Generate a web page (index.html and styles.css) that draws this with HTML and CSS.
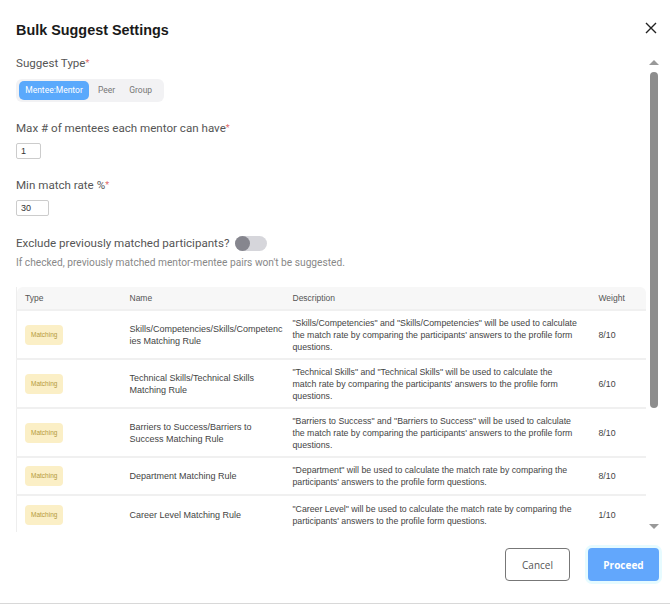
FILE: index.html
```html
<!DOCTYPE html>
<html lang="en">
<head>
  <meta charset="UTF-8" />
  <title>Bulk Suggest Settings</title>
  <link rel="stylesheet" href="styles.css">
</head>
<body>
  <div class="modal">
    <div class="modal-head">
      <h1>Bulk Suggest Settings</h1>
      <button class="close" aria-label="Close">
        <svg width="12" height="12" viewBox="0 0 12 12"><path d="M1 1L11 11M11 1L1 11" stroke="#222" stroke-width="1.4" fill="none"/></svg>
      </button>
    </div>

    <div class="modal-body">
      <div class="pane">
        <div class="label">Suggest Type<span class="req">*</span></div>
        <div class="segmented">
          <span class="seg active">Mentee:Mentor</span>
          <span class="seg">Peer</span>
          <span class="seg">Group</span>
        </div>

        <div class="label">Max # of mentees each mentor can have<span class="req">*</span></div>
        <input class="num small" value="1">

        <div class="label">Min match rate %<span class="req">*</span></div>
        <input class="num" value="30">

        <div class="label exclude">Exclude previously matched participants?
          <span class="toggle"><span class="knob"></span></span>
        </div>
        <div class="hint">If checked, previously matched mentor-mentee pairs won't be suggested.</div>

        <table class="rules">
          <thead>
            <tr><th class="c-type">Type</th><th class="c-name">Name</th><th class="c-desc">Description</th><th class="c-w">Weight</th></tr>
          </thead>
          <tbody>
            <tr class="tall">
              <td><span class="badge">Matching</span></td>
              <td>Skills/Competencies/Skills/Competenc ies Matching Rule</td>
              <td>"Skills/Competencies" and "Skills/Competencies" will be used to calculate the match rate by comparing the participants' answers to the profile form questions.</td>
              <td>8/10</td>
            </tr>
            <tr class="tall">
              <td><span class="badge">Matching</span></td>
              <td>Technical Skills/Technical Skills Matching Rule</td>
              <td>"Technical Skills" and "Technical Skills" will be used to calculate the match rate by comparing the participants' answers to the profile form questions.</td>
              <td>6/10</td>
            </tr>
            <tr class="tall">
              <td><span class="badge">Matching</span></td>
              <td>Barriers to Success/Barriers to Success Matching Rule</td>
              <td>"Barriers to Success" and "Barriers to Success" will be used to calculate the match rate by comparing the participants' answers to the profile form questions.</td>
              <td>8/10</td>
            </tr>
            <tr>
              <td><span class="badge">Matching</span></td>
              <td>Department Matching Rule</td>
              <td>"Department" will be used to calculate the match rate by comparing the participants' answers to the profile form questions.</td>
              <td>8/10</td>
            </tr>
            <tr>
              <td><span class="badge">Matching</span></td>
              <td>Career Level Matching Rule</td>
              <td>"Career Level" will be used to calculate the match rate by comparing the participants' answers to the profile form questions.</td>
              <td>1/10</td>
            </tr>
          </tbody>
        </table>
      </div>
      <div class="scrollbar">
        <span class="arrow up"></span>
        <span class="thumb"></span>
        <span class="arrow down"></span>
      </div>
    </div>

    <div class="modal-foot">
      <button class="btn cancel">Cancel</button>
      <button class="btn proceed">Proceed</button>
    </div>
  </div>
</body>
</html>
```

FILE: styles.css
```css
* { box-sizing: border-box; }
body {
  margin: 0;
  background: #fff;
  font-family: Roboto, "Liberation Sans", sans-serif;
  color: #333;
}
.modal {
  width: 670px;
  height: 604px;
  display: flex;
  flex-direction: column;
  border-bottom: 1px solid #d8d8d8;
}
.modal-head {
  height: 55px;
  display: flex;
  align-items: center;
  justify-content: space-between;
  padding: 0 12px 0 16px;
}
.modal-head h1 {
  margin: 4px 0 0;
  font-family: "Liberation Sans", Arial, sans-serif;
  font-size: 14.4px;
  font-weight: 700;
  color: #1a1a1a;
}
.close {
  border: 0;
  background: none;
  padding: 0;
  width: 14px;
  height: 14px;
  display: flex;
  align-items: center;
  justify-content: center;
}

.modal-body {
  height: 477px;
  display: flex;
}
.pane {
  flex: 1;
  overflow: hidden;
  padding-left: 16px;
}
.label {
  font-size: 11.6px;
  line-height: 16px;
  color: #555;
  margin-top: 18px;
}
.pane > .label:first-child { margin-top: 0; }
.req { color: #e06a6a; font-size: 9px; vertical-align: top; }

.segmented {
  display: flex;
  align-items: center;
  margin-top: 8px;
  padding: 2px 3px;
  height: 23px;
  width: 148px;
  background: #f2f2f4;
  border-radius: 6px;
}
.seg {
  font-size: 8.5px;
  color: #777;
  line-height: 19px;
  padding: 0 7px;
}
.seg.active {
  background: #5aa9fc;
  color: #fff;
  border-radius: 5px;
  width: 70px;
  padding: 0;
  margin-right: 2px;
  text-align: center;
}

.num {
  display: block;
  margin-top: 7px;
  width: 33px;
  height: 16px;
  border: 1px solid #ccc;
  border-radius: 2px;
  padding: 0 4px;
  font-size: 9px;
  font-family: "Liberation Sans", sans-serif;
  color: #333;
}
.num.small { width: 25px; }

.exclude {
  display: flex;
  align-items: center;
  gap: 6px;
  margin-top: 19px;
}
.toggle {
  width: 32px;
  height: 15px;
  border-radius: 8px;
  background: #d6d6db;
  display: inline-flex;
}
.knob {
  width: 15px;
  height: 15px;
  border-radius: 50%;
  background: #86868e;
}
.hint {
  margin-top: 6px;
  font-size: 10.2px;
  color: #888;
}

.rules {
  margin-top: 19px;
  width: 630px;
  border-collapse: collapse;
  font-family: "Liberation Sans", Arial, sans-serif;
  font-size: 8.75px;
  line-height: 12px;
  color: #444;
  table-layout: fixed;
  border-left: 1px solid #eee;
}
.rules th {
  background: #f7f7f7;
  font-weight: 400;
  font-size: 8.5px;
  color: #555;
  text-align: left;
  height: 23px;
  padding: 0 8px;
}
.rules th:first-child { border-top-left-radius: 6px; }
.rules th:last-child { border-top-right-radius: 6px; }
.c-type { width: 105px; }
.c-name { width: 163px; }
.c-desc { width: 301px; }
.rules td {
  padding: 0 8px;
  height: 38px;
  border-top: 2px solid #f0f0f0;
  vertical-align: middle;
}
.rules th:last-child,
.rules td:last-child { padding-left: 13px; }
.rules tr.tall td { height: 49px; }
.rules td:nth-child(2) { font-size: 9px; padding-right: 6px; }
.badge {
  display: inline-block;
  background: #fbefc6;
  color: #b49a3c;
  font-size: 6.5px;
  border-radius: 4px;
  padding: 0 6px;
  line-height: 20px;
}

.scrollbar {
  width: 16px;
  margin-right: 8px;
  display: flex;
  flex-direction: column;
  align-items: center;
  padding-top: 5px;
}
.arrow {
  width: 0;
  height: 0;
  border-left: 5px solid transparent;
  border-right: 5px solid transparent;
}
.arrow.up { border-bottom: 5px solid #999; }
.arrow.down { border-top: 5px solid #999; margin-top: auto; margin-bottom: 3px; }
.thumb {
  margin-top: 7px;
  width: 8px;
  height: 336px;
  border-radius: 4px;
  background: #8d8d8d;
}

.modal-foot {
  flex: 1;
  display: flex;
  justify-content: flex-end;
  align-items: center;
  gap: 18px;
  padding: 0 11px 6px 0;
}
.btn {
  height: 33px;
  border-radius: 4px;
  font-family: "Open Sans", sans-serif;
  font-size: 10px;
}
.cancel {
  width: 65px;
  background: #fff;
  border: 1px solid #777;
  color: #555;
}
.proceed {
  width: 71px;
  background: #62a7fc;
  border: 0;
  color: #fff;
  font-weight: 700;
  box-shadow: 0 0 0 3px #e6fbff;
}
```
